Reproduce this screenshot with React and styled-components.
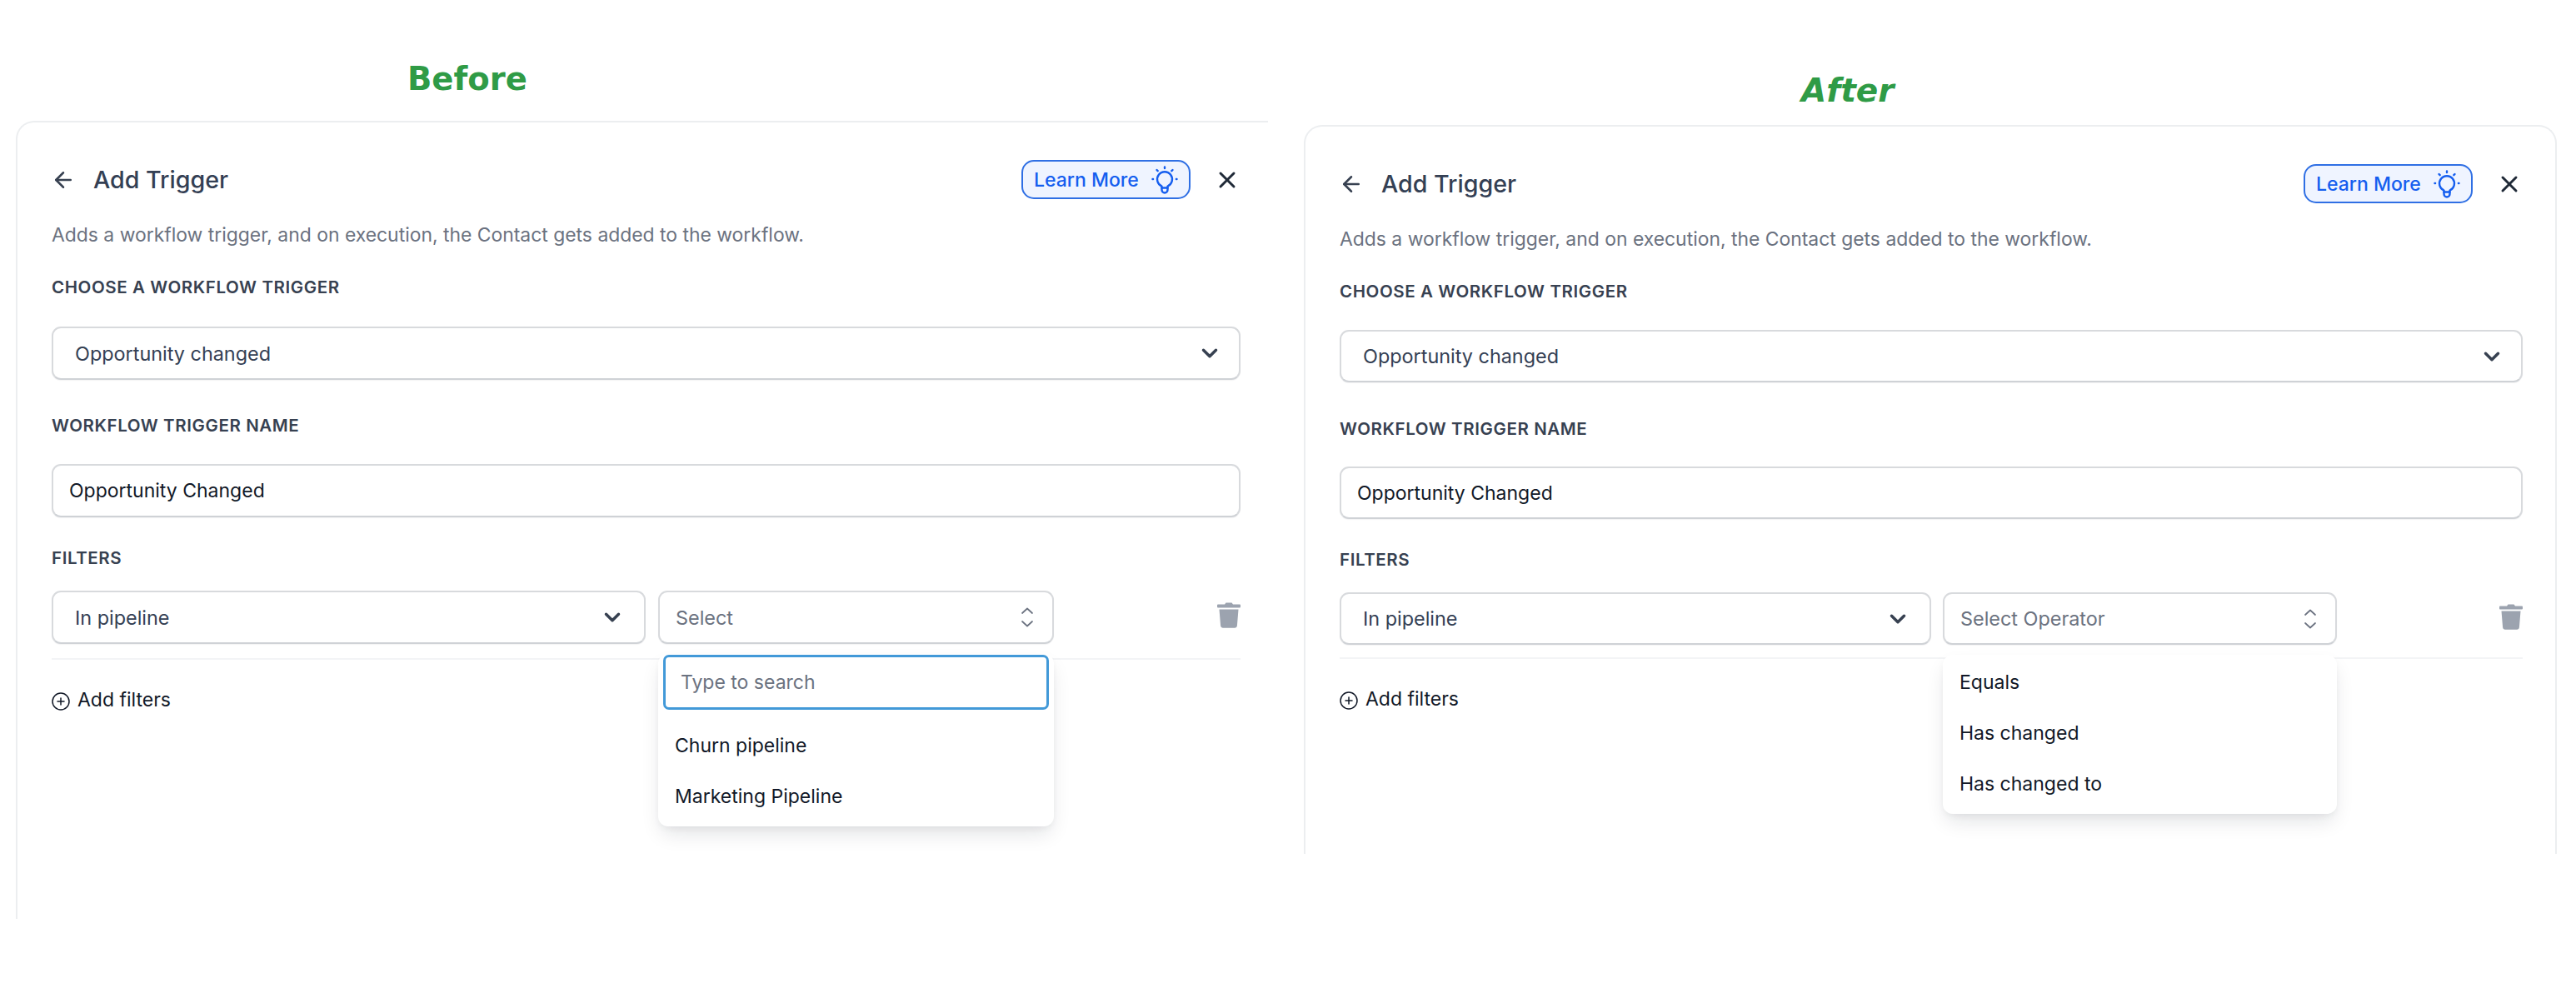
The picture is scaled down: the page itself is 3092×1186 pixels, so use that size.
import React from "react";
import styled, { createGlobalStyle } from "styled-components";
import { ArrowLeft, ChevronDown, CirclePlus, X } from "lucide-react";

const GlobalStyle = createGlobalStyle`
  html, body {
    margin: 0;
    padding: 0;
    background: #fff;
  }
  body {
    font-family: Inter, "Liberation Sans", sans-serif;
    -webkit-font-smoothing: antialiased;
  }
`;

const BulbIcon = () => (
  <svg width="32" height="34" viewBox="0 0 32 34" fill="none" stroke="#155eef" strokeWidth="2.4" strokeLinecap="round" strokeLinejoin="round">
    <path d="M12.5 24.5a9 9 0 1 1 7 0v4.5a3.5 3.5 0 0 1-7 0z" />
    <path d="M12.5 26.5h7" />
    <path d="M16 1.5v1.6M6.5 5l1.2 1.2M25.5 5l-1.2 1.2M1.5 16h.6M29.9 16h.6" />
  </svg>
);

const TrashIcon = () => (
  <svg width="28" height="32" viewBox="0 0 28 32" fill="#9ca3af">
    <path d="M10.5 1.5h7l1.5 2h8a1 1 0 0 1 1 1v2a1 1 0 0 1-1 1H1a1 1 0 0 1-1-1v-2a1 1 0 0 1 1-1h8z" />
    <path d="M2.5 9.5h23l-1.6 19.8a2.6 2.6 0 0 1-2.6 2.4H6.7a2.6 2.6 0 0 1-2.6-2.4z" />
  </svg>
);

const UpDownIcon = () => (
  <svg width="16" height="24" viewBox="0 0 16 24" fill="none" stroke="#6b7280" strokeWidth="1.7" strokeLinecap="round" strokeLinejoin="round">
    <path d="M2 7l6-5.5L14 7" />
    <path d="M2 17l6 5.5L14 17" />
  </svg>
);

const Page = styled.div`
  display: grid;
  grid-template-columns: 1503px 1504px;
  column-gap: 43px;
  width: 3092px;
  height: 1186px;
  padding-left: 19px;
  box-sizing: border-box;
  overflow: hidden;
`;

const Column = styled.div`
  display: flex;
  flex-direction: column;
`;

const Caption = styled.div`
  height: ${(p) => p.$height}px;
  padding-top: ${(p) => p.$top}px;
  padding-left: ${(p) => p.$left}px;
  box-sizing: border-box;
  font-family: "Comic Sans MS", "DejaVu Sans", cursive;
  font-size: ${(p) => p.$size}px;
  line-height: 1;
  font-weight: 700;
  font-style: ${(p) => (p.$slanted ? "italic" : "normal")};
  color: #2f9b46;
`;

const Card = styled.section`
  height: ${(p) => p.$height}px;
  box-sizing: border-box;
  padding: 45px ${(p) => p.$right}px 0 41px;
  background: #fff;
  border: 2px solid #eceef0;
  border-bottom: 0;
  border-right-width: ${(p) => (p.$open ? 0 : 2)}px;
  border-radius: ${(p) => (p.$open ? "22px 0 0 0" : "22px 22px 0 0")};
`;

const Header = styled.div`
  display: flex;
  align-items: center;
  height: 47px;
`;

const BackIcon = styled(ArrowLeft)`
  width: 30px;
  height: 30px;
  margin-left: -1px;
  color: #374151;
  flex-shrink: 0;
`;

const Title = styled.h2`
  margin: 0 0 0 21px;
  flex: 1;
  font-size: 28.6px;
  font-weight: 500;
  color: #344054;
`;

const LearnMore = styled.button`
  display: flex;
  align-items: center;
  justify-content: space-between;
  width: 203px;
  height: 47px;
  padding: 0 13px;
  box-sizing: border-box;
  background: #eff4ff;
  border: 2px solid #2f6fe4;
  border-radius: 15px;
  font-family: inherit;
  font-size: 23px;
  font-weight: 500;
  color: #155eef;
`;

const CloseIcon = styled(X)`
  width: 32px;
  height: 32px;
  margin-left: 28px;
  margin-right: 0;
  color: #1f2937;
  stroke-width: 2.2;
`;

const Description = styled.p`
  margin: 28px 0 0;
  font-size: 22.9px;
  line-height: 30px;
  color: #6b7280;
`;

const Label = styled.div`
  margin-top: ${(p) => p.$top}px;
  font-size: 20.5px;
  line-height: 26px;
  font-weight: 600;
  letter-spacing: 0.6px;
  color: #374151;
`;

const Field = styled.div`
  display: flex;
  align-items: center;
  justify-content: space-between;
  width: ${(p) => (p.$width ? `${p.$width}px` : "auto")};
  height: ${(p) => p.$height}px;
  margin-top: ${(p) => p.$top || 0}px;
  padding: 0 ${(p) => p.$right}px 0 ${(p) => p.$left}px;
  box-sizing: border-box;
  background: #fff;
  border: 2px solid #d8dadd;
  border-bottom-color: #cfd2d6;
  border-radius: 11px;
  box-shadow: 0 1px 1px rgba(16, 24, 40, 0.05);
  font-size: ${(p) => p.$size || 23.4}px;
  color: ${(p) => p.$color || "#344054"};
`;

const Chevron = styled(ChevronDown)`
  width: 30px;
  height: 30px;
  color: #374151;
  stroke-width: 2.8;
`;

const FilterRow = styled.div`
  display: flex;
  align-items: flex-start;
  margin-top: 26px;
  padding-bottom: ${(p) => p.$pad}px;
  border-bottom: 2px solid #f3f4f6;
`;

const OperatorSlot = styled.div`
  position: relative;
  margin-left: ${(p) => p.$gap}px;
`;

const TrashSlot = styled.div`
  margin-left: auto;
  margin-top: 13px;
  height: 32px;
`;

const Menu = styled.div`
  position: absolute;
  top: calc(100% + 12px);
  left: 0;
  right: 0;
  padding: ${(p) => p.$top}px 6px 6px;
  background: #fff;
  border-radius: 12px;
  box-shadow: 0 12px 24px -4px rgba(16, 24, 40, 0.12), 0 4px 8px -2px rgba(16, 24, 40, 0.06);
`;

const Search = styled.div`
  display: flex;
  align-items: center;
  height: 66px;
  margin-bottom: 12px;
  padding-left: 18px;
  box-sizing: border-box;
  border: 3px solid #4299d8;
  border-radius: 7px;
  font-size: 23px;
  color: #6b7280;
`;

const MenuItem = styled.div`
  display: flex;
  align-items: center;
  height: 61px;
  padding-left: 14px;
  font-size: 23px;
  color: #111827;
`;

const AddFilters = styled.div`
  display: flex;
  align-items: center;
  gap: 8px;
  margin-top: ${(p) => p.$top}px;
  font-size: 23px;
  line-height: 30px;
  color: #111827;
`;

const PlusIcon = styled(CirclePlus)`
  width: 24px;
  height: 24px;
  margin: 4px 0 0 -1px;
  stroke-width: 1.5;
`;

const panels = [
  {
    caption: "Before",
    captionProps: { $height: 145, $top: 76, $left: 470, $size: 38.5 },
    card: { $height: 958, $right: 33, $open: true },
    spacing: { label1: 35, field1: 34, label2: 42, field2: 33, label3: 36, rowPad: 17, add: 33 },
    fieldHeight: 64,
    firstWidth: 713,
    operatorGap: 15,
    operatorWidth: 475,
    operatorText: "Select",
    menuTop: 1,
    search: true,
    items: ["Churn pipeline", "Marketing Pipeline"],
  },
  {
    caption: "After",
    captionProps: { $height: 150, $top: 89, $left: 597, $size: 39, $slanted: true },
    card: { $height: 875, $right: 39, $open: false },
    spacing: { label1: 35, field1: 33, label2: 43, field2: 32, label3: 36, rowPad: 15, add: 33 },
    fieldHeight: 63,
    firstWidth: 710,
    operatorGap: 14,
    operatorWidth: 473,
    operatorText: "Select Operator",
    menuTop: 2,
    search: false,
    items: ["Equals", "Has changed", "Has changed to"],
  },
];

const Panel = ({ data }) => {
  const s = data.spacing;
  const h = data.fieldHeight;
  return (
    <Column>
      <Caption {...data.captionProps}>{data.caption}</Caption>
      <Card {...data.card}>
        <Header>
          <BackIcon strokeWidth={2} />
          <Title>Add Trigger</Title>
          <LearnMore>
            Learn More
            <BulbIcon />
          </LearnMore>
          <CloseIcon />
        </Header>
        <Description>Adds a workflow trigger, and on execution, the Contact gets added to the workflow.</Description>
        <Label $top={s.label1}>CHOOSE A WORKFLOW TRIGGER</Label>
        <Field $height={h} $top={s.field1} $left={26} $right={20}>
          Opportunity changed
          <Chevron />
        </Field>
        <Label $top={s.label2}>WORKFLOW TRIGGER NAME</Label>
        <Field $height={h} $top={s.field2} $left={19} $right={18} $size={23} $color="#111827">
          Opportunity Changed
        </Field>
        <Label $top={s.label3}>FILTERS</Label>
        <FilterRow $pad={s.rowPad}>
          <Field $height={h} $width={data.firstWidth} $left={26} $right={23}>
            In pipeline
            <Chevron />
          </Field>
          <OperatorSlot $gap={data.operatorGap}>
            <Field $height={h} $width={data.operatorWidth} $left={19} $right={22} $color="#6b7280">
              {data.operatorText}
              <UpDownIcon />
            </Field>
            <Menu $top={data.menuTop}>
              {data.search && <Search>Type to search</Search>}
              {data.items.map((item) => (
                <MenuItem key={item}>{item}</MenuItem>
              ))}
            </Menu>
          </OperatorSlot>
          <TrashSlot>
            <TrashIcon />
          </TrashSlot>
        </FilterRow>
        <AddFilters $top={s.add}>
          <PlusIcon />
          Add filters
        </AddFilters>
      </Card>
    </Column>
  );
};

const App = () => (
  <Page>
    <GlobalStyle />
    {panels.map((panel) => (
      <Panel key={panel.caption} data={panel} />
    ))}
  </Page>
);

export default App;
